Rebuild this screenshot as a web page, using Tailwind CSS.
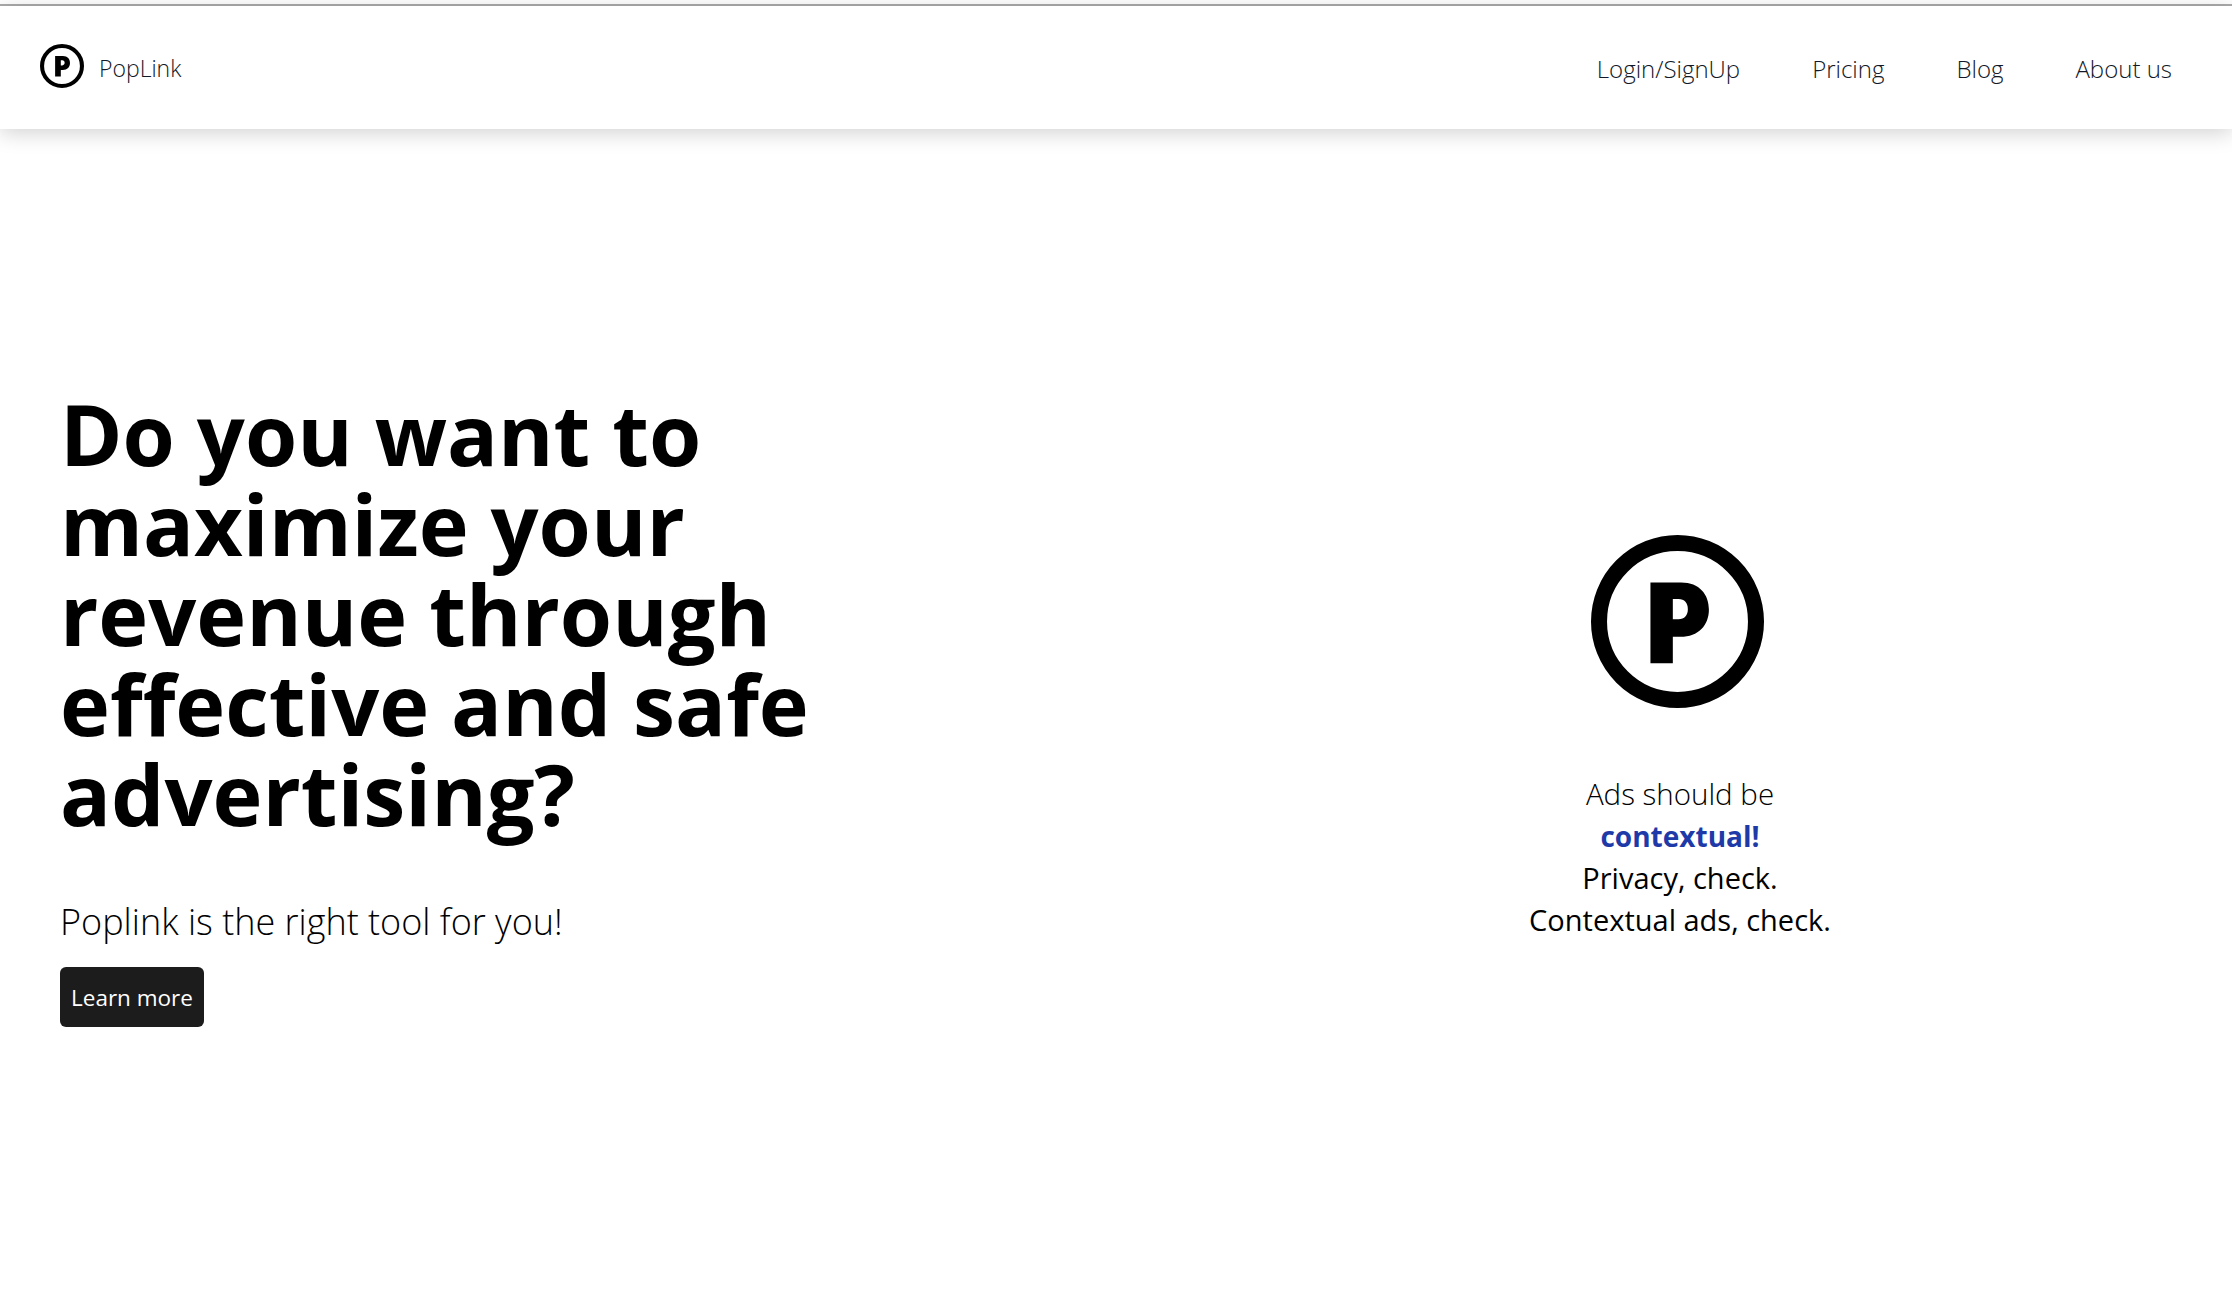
<!DOCTYPE html>
<html lang="en">
<head>
    <meta charset="UTF-8">
    <meta name="viewport" content="width=device-width, initial-scale=1.0">
    <title>PopLink</title>
    <script src="https://cdn.jsdelivr.net/npm/@tailwindcss/browser@4"></script>
</head>
<body class="bg-white min-h-screen overflow-hidden font-['Open_Sans',sans-serif] text-black">
    <div class="h-1 bg-white"></div>
    <div class="h-[2px] bg-[#ababab]"></div>
    <header class="h-[123px] bg-white shadow-[0_4px_20px_rgba(0,0,0,0.18)] flex items-center justify-between pl-[40px] pr-[60px]">
        <a href="#" class="flex items-center gap-[15px] pb-[4px]">
            <svg class="w-[44px] h-[44px]" viewBox="0 0 518 518">
                <circle cx="259" cy="259" r="235" fill="none" stroke="#000" stroke-width="48"/>
                <path fill="#000" fill-rule="evenodd" d="M178 142H270C325 142 353 178 353 223C353 270 322 305 268 305H245V384H178ZM245 192V252H262C280 252 290 240 290 222C290 204 280 192 262 192Z"/>
            </svg>
            <span class="text-[23px] font-[350] text-[#111827] translate-y-[3px]">PopLink</span>
        </a>
        <nav class="flex items-center gap-[72px] text-[24px] font-[350] text-[#111827] pt-[2px]">
            <a href="#">Login/SignUp</a>
            <a href="#">Pricing</a>
            <a href="#">Blog</a>
            <a href="#">About us</a>
        </nav>
    </header>
    <main class="flex">
        <section class="w-[1128px] pl-[60px] pt-[260px]">
            <h1 class="text-[84.5px] leading-[90px] font-bold w-[800px]">Do you want to maximize your revenue through effective and safe advertising?</h1>
            <p class="text-[36px] font-[350] mt-[56px]">Poplink is the right tool for you!</p>
            <button class="mt-[18px] h-[60px] w-[144px] pt-[2px] bg-[#1c1c1c] text-white text-[22.5px] rounded-md">Learn more</button>
        </section>
        <section class="w-[1104px] pt-[406px] flex flex-col items-center text-[29px] leading-[42px]">
            <svg class="w-[173px] h-[173px] -ml-[6px]" viewBox="0 0 518 518">
                <circle cx="259" cy="259" r="235" fill="none" stroke="#000" stroke-width="48"/>
                <path fill="#000" fill-rule="evenodd" d="M178 142H270C325 142 353 178 353 223C353 270 322 305 268 305H245V384H178ZM245 192V252H262C280 252 290 240 290 222C290 204 280 192 262 192Z"/>
            </svg>
            <div class="mt-[65px] text-center">
                <p class="font-[350] text-[29.5px]">Ads should be</p>
                <p class="font-bold text-[28px] text-[#1e3aa8]">contextual!</p>
                <p class="font-[450]">Privacy, check.</p>
                <p class="font-[450]">Contextual ads, check.</p>
            </div>
        </section>
    </main>
</body>
</html>
